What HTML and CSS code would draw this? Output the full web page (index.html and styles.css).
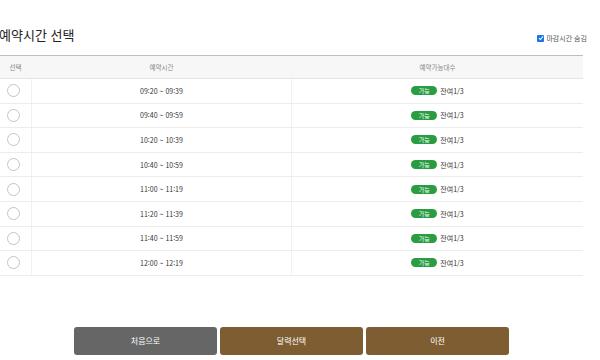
FILE: index.html
```html
<!DOCTYPE html>
<html lang="ko">
<head>
<meta charset="utf-8">
<link rel="stylesheet" href="styles.css">
</head>
<body>
<div class="wrap">
  <div class="top">
    <h1 class="title">예약시간 선택</h1>
    <label class="hide"><span class="chk"><svg viewBox="0 0 8 8" width="6" height="6"><path d="M1.2 4.2 L3.2 6 L6.8 1.8" fill="none" stroke="#fff" stroke-width="1.4"/></svg></span>마감시간 숨김</label>
  </div>
  <div class="table">
    <div class="row head">
      <div class="c1">선택</div><div class="c2">예약시간</div><div class="c3">예약가능대수</div>
    </div>
    <div class="row"><div class="c1"><span class="radio"></span></div><div class="c2">09:20 ~ 09:39</div><div class="c3"><span class="badge">가능</span>잔여1/3</div></div>
    <div class="row"><div class="c1"><span class="radio"></span></div><div class="c2">09:40 ~ 09:59</div><div class="c3"><span class="badge">가능</span>잔여1/3</div></div>
    <div class="row"><div class="c1"><span class="radio"></span></div><div class="c2">10:20 ~ 10:39</div><div class="c3"><span class="badge">가능</span>잔여1/3</div></div>
    <div class="row"><div class="c1"><span class="radio"></span></div><div class="c2">10:40 ~ 10:59</div><div class="c3"><span class="badge">가능</span>잔여1/3</div></div>
    <div class="row"><div class="c1"><span class="radio"></span></div><div class="c2">11:00 ~ 11:19</div><div class="c3"><span class="badge">가능</span>잔여1/3</div></div>
    <div class="row"><div class="c1"><span class="radio"></span></div><div class="c2">11:20 ~ 11:39</div><div class="c3"><span class="badge">가능</span>잔여1/3</div></div>
    <div class="row"><div class="c1"><span class="radio"></span></div><div class="c2">11:40 ~ 11:59</div><div class="c3"><span class="badge">가능</span>잔여1/3</div></div>
    <div class="row"><div class="c1"><span class="radio"></span></div><div class="c2">12:00 ~ 12:19</div><div class="c3"><span class="badge">가능</span>잔여1/3</div></div>
  </div>
  <div class="btns">
    <button class="btn gray">처음으로</button>
    <button class="btn brown">달력선택</button>
    <button class="btn brown">이전</button>
  </div>
</div>
</body>
</html>
```
FILE: styles.css
```css
html, body {
  margin: 0;
  padding: 0;
  background: #fff;
}
body {
  font-family: "Noto Sans CJK KR", "Noto Sans", "Liberation Sans", sans-serif;
  color: #333;
}
.wrap {
  width: 583px;
}
.top {
  display: flex;
  justify-content: space-between;
  align-items: flex-end;
  height: 55px;
  padding-bottom: 12px;
  box-sizing: border-box;
}
.title {
  margin: 0 0 0 -1px;
  font-size: 13px;
  font-weight: 400;
  color: #222;
  line-height: 16px;
}
.hide {
  display: flex;
  align-items: center;
  gap: 2px;
  font-size: 7px;
  color: #555;
  margin-right: -4px;
  margin-bottom: 0;
}
.chk {
  width: 7px;
  height: 7px;
  background: #1a73e8;
  border-radius: 1px;
  display: flex;
  align-items: center;
  justify-content: center;
}
.table {
  border-top: 1px solid #bdbdbd;
}
.row {
  display: grid;
  grid-template-columns: 31px 261px 1fr;
  height: 23.6px;
  border-bottom: 1px solid #ececec;
  font-size: 7px;
  color: #333;
}
.row > div {
  display: flex;
  align-items: center;
  justify-content: center;
}
.row .c2 {
  border-left: 1px solid #f0f0f0;
  border-right: 1px solid #f0f0f0;
}
.head {
  background: #f7f7f7;
  height: 22px;
  color: #888;
  font-size: 6.5px;
  border-bottom: 1px solid #e4e4e4;
}
.head .c2 {
  border-color: transparent;
}
.radio {
  width: 11px;
  height: 11px;
  border: 1px solid #c4c4c4;
  border-radius: 50%;
  background: #fff;
  margin-right: 4px;
}
.badge {
  display: inline-flex;
  align-items: center;
  justify-content: center;
  width: 26px;
  height: 9px;
  border-radius: 5px;
  background: #2a9d43;
  color: #fff;
  font-size: 6px;
  margin-right: 3px;
}
.btns {
  display: flex;
  justify-content: center;
  gap: 3px;
  margin-top: 51px;
}
.btn {
  width: 143px;
  height: 28px;
  border: none;
  border-radius: 3px;
  color: #fff;
  font-family: inherit;
  font-size: 8px;
  padding: 0;
}
.gray { background: #666666; }
.brown { background: #7d5d31; }
```
